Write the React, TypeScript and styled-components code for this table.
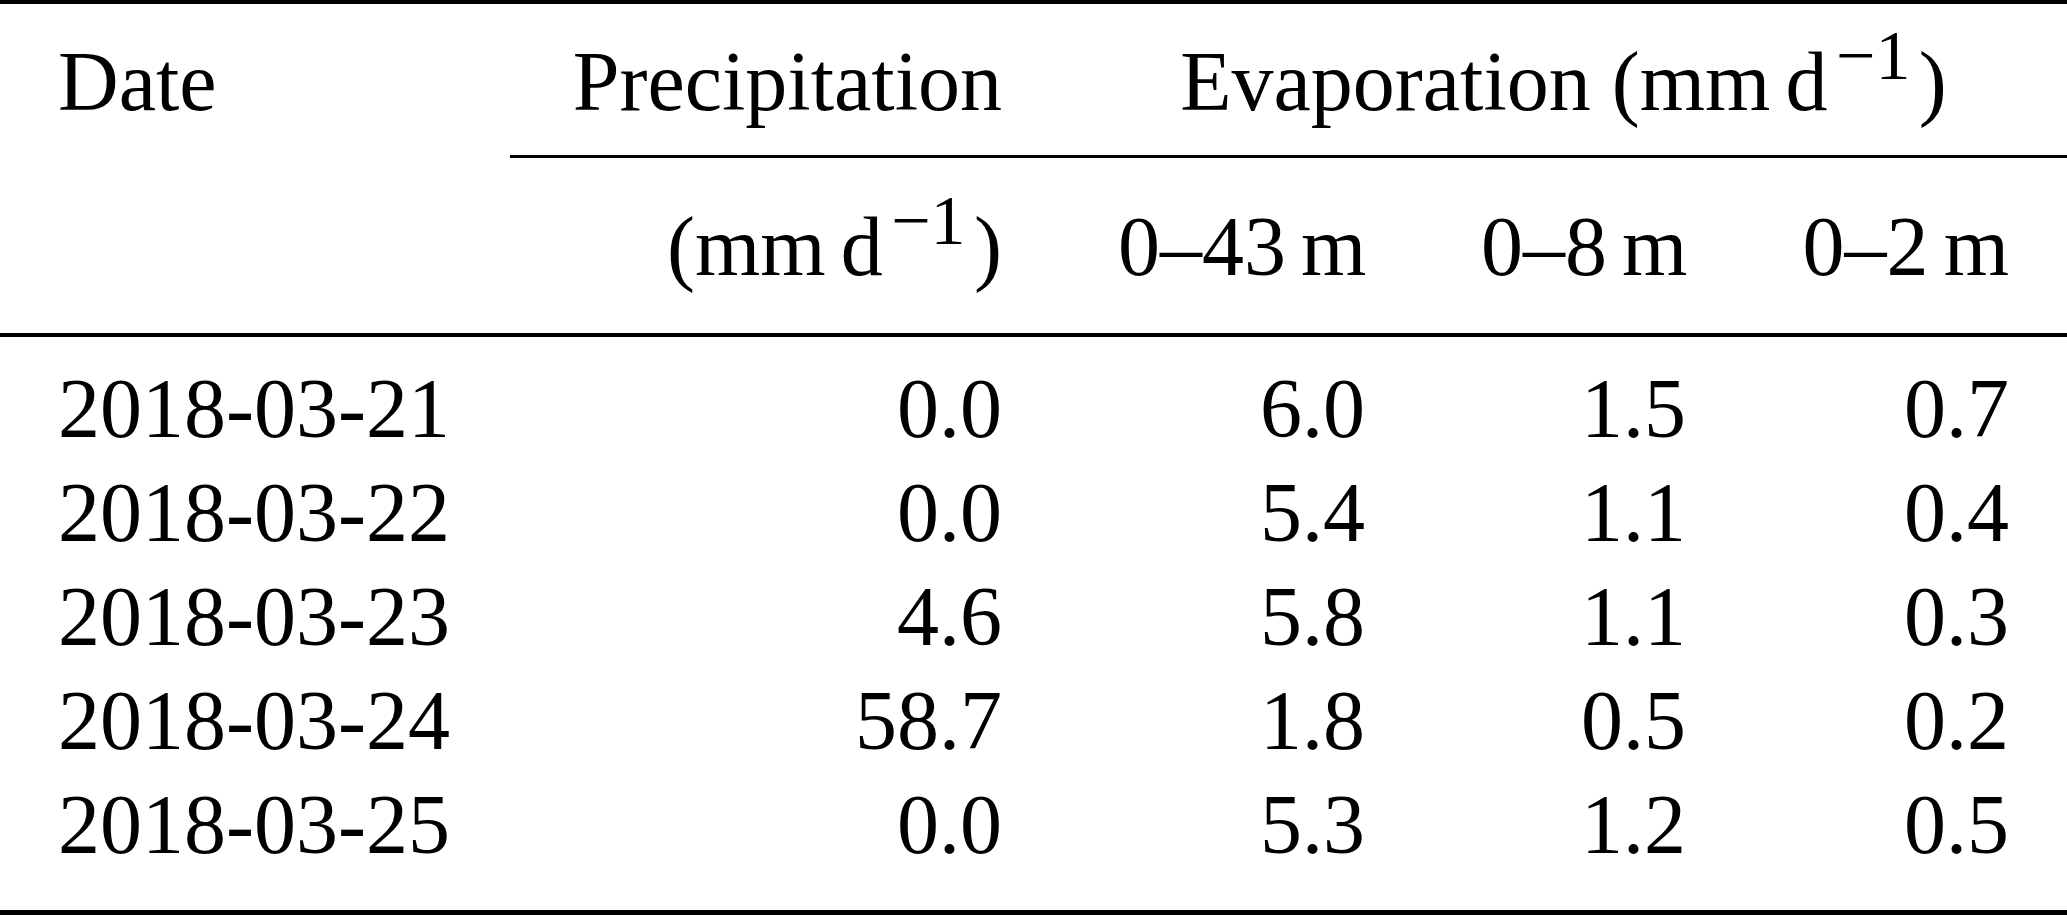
import React from 'react';
import styled, { createGlobalStyle } from 'styled-components';

const GlobalStyle = createGlobalStyle`
  html, body {
    margin: 0;
    padding: 0;
    background: #ffffff;
  }
`;

const COLUMNS = '510px 550px 363px 321px 1fr';

const Table = styled.div`
  width: 2067px;
  display: flex;
  flex-direction: column;
  font-family: 'Liberation Serif', 'Times New Roman', serif;
  font-size: 84px;
  color: #000;
`;

const Rule = styled.div<{ $h: number; $inset?: number }>`
  height: ${(p) => p.$h}px;
  margin-left: ${(p) => p.$inset ?? 0}px;
  background: #000;
`;

const Row = styled.div<{ $pt?: number; $pb?: number }>`
  display: grid;
  grid-template-columns: ${COLUMNS};
  padding-top: ${(p) => p.$pt ?? 0}px;
  padding-bottom: ${(p) => p.$pb ?? 0}px;
`;

const Body = styled.div`
  padding: 20px 0 33px;
`;

const Cell = styled.div<{ $align?: 'left' | 'right' | 'center'; $span?: number }>`
  grid-column: span ${(p) => p.$span ?? 1};
  padding: 0 58px;
  line-height: 104px;
  height: 104px;
  text-align: ${(p) => p.$align ?? 'right'};
  white-space: nowrap;
`;

const Sup = styled.span`
  font-size: 70px;
  line-height: 0;
  vertical-align: 31px;
  margin: 0 0.12em 0 0.12em;
`;

const Thin = styled.span`
  margin-left: 0.18em;
`;

const Unit: React.FC = () => (
  <>
    (mm<Thin />d<Sup>−1</Sup>)
  </>
);

const Depth: React.FC<{ range: string }> = ({ range }) => (
  <>
    {range}
    <Thin />m
  </>
);

const rows: string[][] = [
  ['2018-03-21', '0.0', '6.0', '1.5', '0.7'],
  ['2018-03-22', '0.0', '5.4', '1.1', '0.4'],
  ['2018-03-23', '4.6', '5.8', '1.1', '0.3'],
  ['2018-03-24', '58.7', '1.8', '0.5', '0.2'],
  ['2018-03-25', '0.0', '5.3', '1.2', '0.5'],
];

const App: React.FC = () => {
  return (
    <>
      <GlobalStyle />
      <Table>
        <Rule $h={4} />
        <Row $pt={26} $pb={21}>
          <Cell $align="left">Date</Cell>
          <Cell>Precipitation</Cell>
          <Cell $align="center" $span={3}>
            Evaporation <Unit />
          </Cell>
        </Row>
        <Rule $h={3} $inset={510} />
        <Row $pt={37} $pb={34}>
          <Cell $align="left" />
          <Cell>
            <Unit />
          </Cell>
          <Cell>
            <Depth range="0–43" />
          </Cell>
          <Cell>
            <Depth range="0–8" />
          </Cell>
          <Cell>
            <Depth range="0–2" />
          </Cell>
        </Row>
        <Rule $h={4} />
        <Body>
          {rows.map((r) => (
            <Row key={r[0]}>
              {r.map((v, i) => (
                <Cell key={i} $align={i === 0 ? 'left' : 'right'}>
                  {v}
                </Cell>
              ))}
            </Row>
          ))}
        </Body>
        <Rule $h={5} />
      </Table>
    </>
  );
};

export default App;
